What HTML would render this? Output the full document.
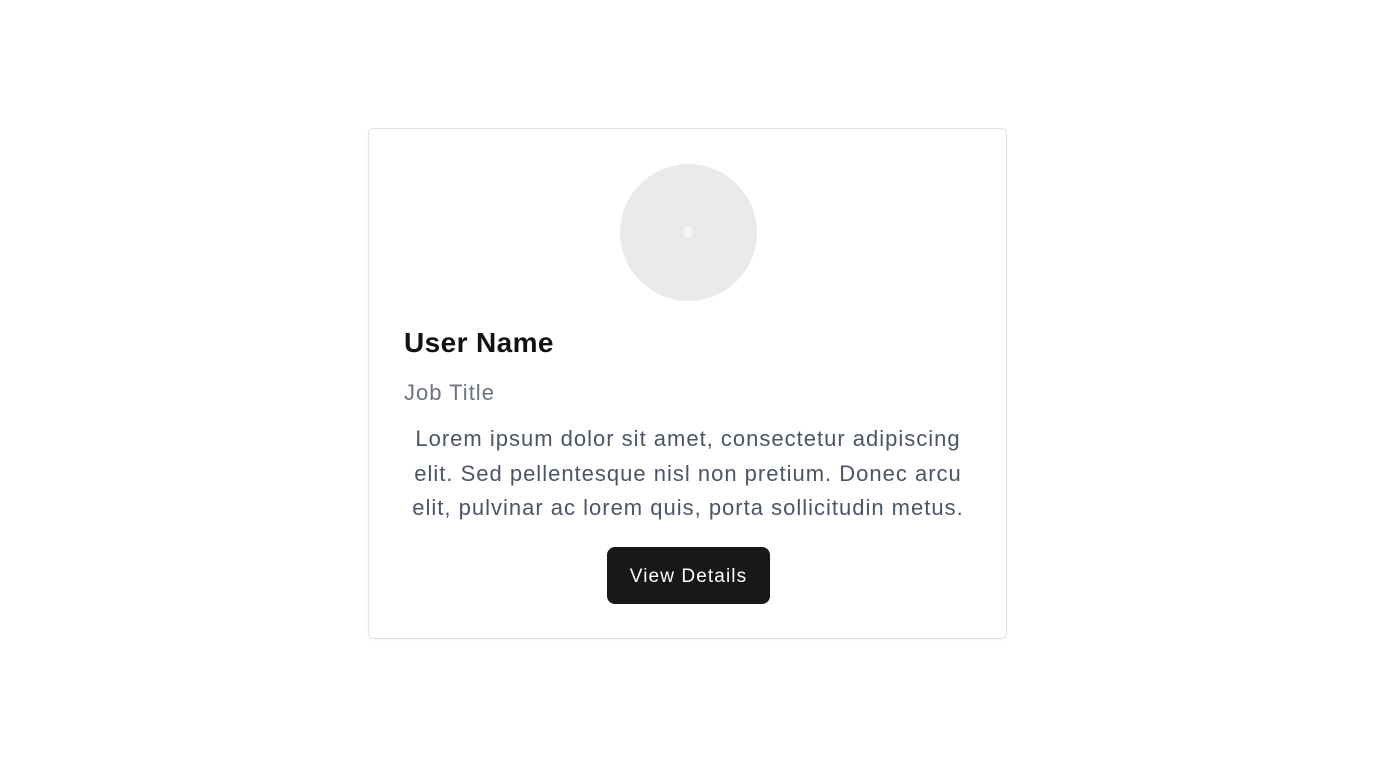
<!DOCTYPE html>
<html><head><style>
body{margin:0;background:#fff;font-family:"Liberation Sans",sans-serif;}
.card{position:absolute;left:368px;top:128px;width:639px;height:511px;border:1px solid #e3e3e3;border-radius:6px;box-sizing:border-box;box-shadow:0 1px 2px rgba(0,0,0,.05);}
.av{position:absolute;left:251px;top:35px;width:137px;height:137px;border-radius:50%;background:#eaeaea;}
.av i{position:absolute;left:62px;top:62px;width:12px;height:12px;border-radius:50%;background:#f3f3f3;}
h2{position:absolute;left:35px;top:198px;margin:0;font-size:28px;font-weight:bold;color:#111;letter-spacing:0.4px;}
.jt{position:absolute;left:35px;top:251px;font-size:22px;color:#6b7280;letter-spacing:1px;}
p{position:absolute;left:0;width:638px;top:293px;margin:0;text-align:center;font-size:22px;line-height:34.5px;color:#4b5563;letter-spacing:1px;}
.btn{position:absolute;left:238px;top:418px;width:163px;height:57px;background:#18181b;border-radius:8px;color:#fff;font-size:19px;line-height:59px;text-align:center;letter-spacing:1.1px;}
</style></head><body>
<div class="card">
<div class="av"><i></i></div>
<h2>User Name</h2>
<div class="jt">Job Title</div>
<p>Lorem ipsum dolor sit amet, consectetur adipiscing<br>elit. Sed pellentesque nisl non pretium. Donec arcu<br>elit, pulvinar ac lorem quis, porta sollicitudin metus.</p>
<div class="btn">View Details</div>
</div>
</body></html>
